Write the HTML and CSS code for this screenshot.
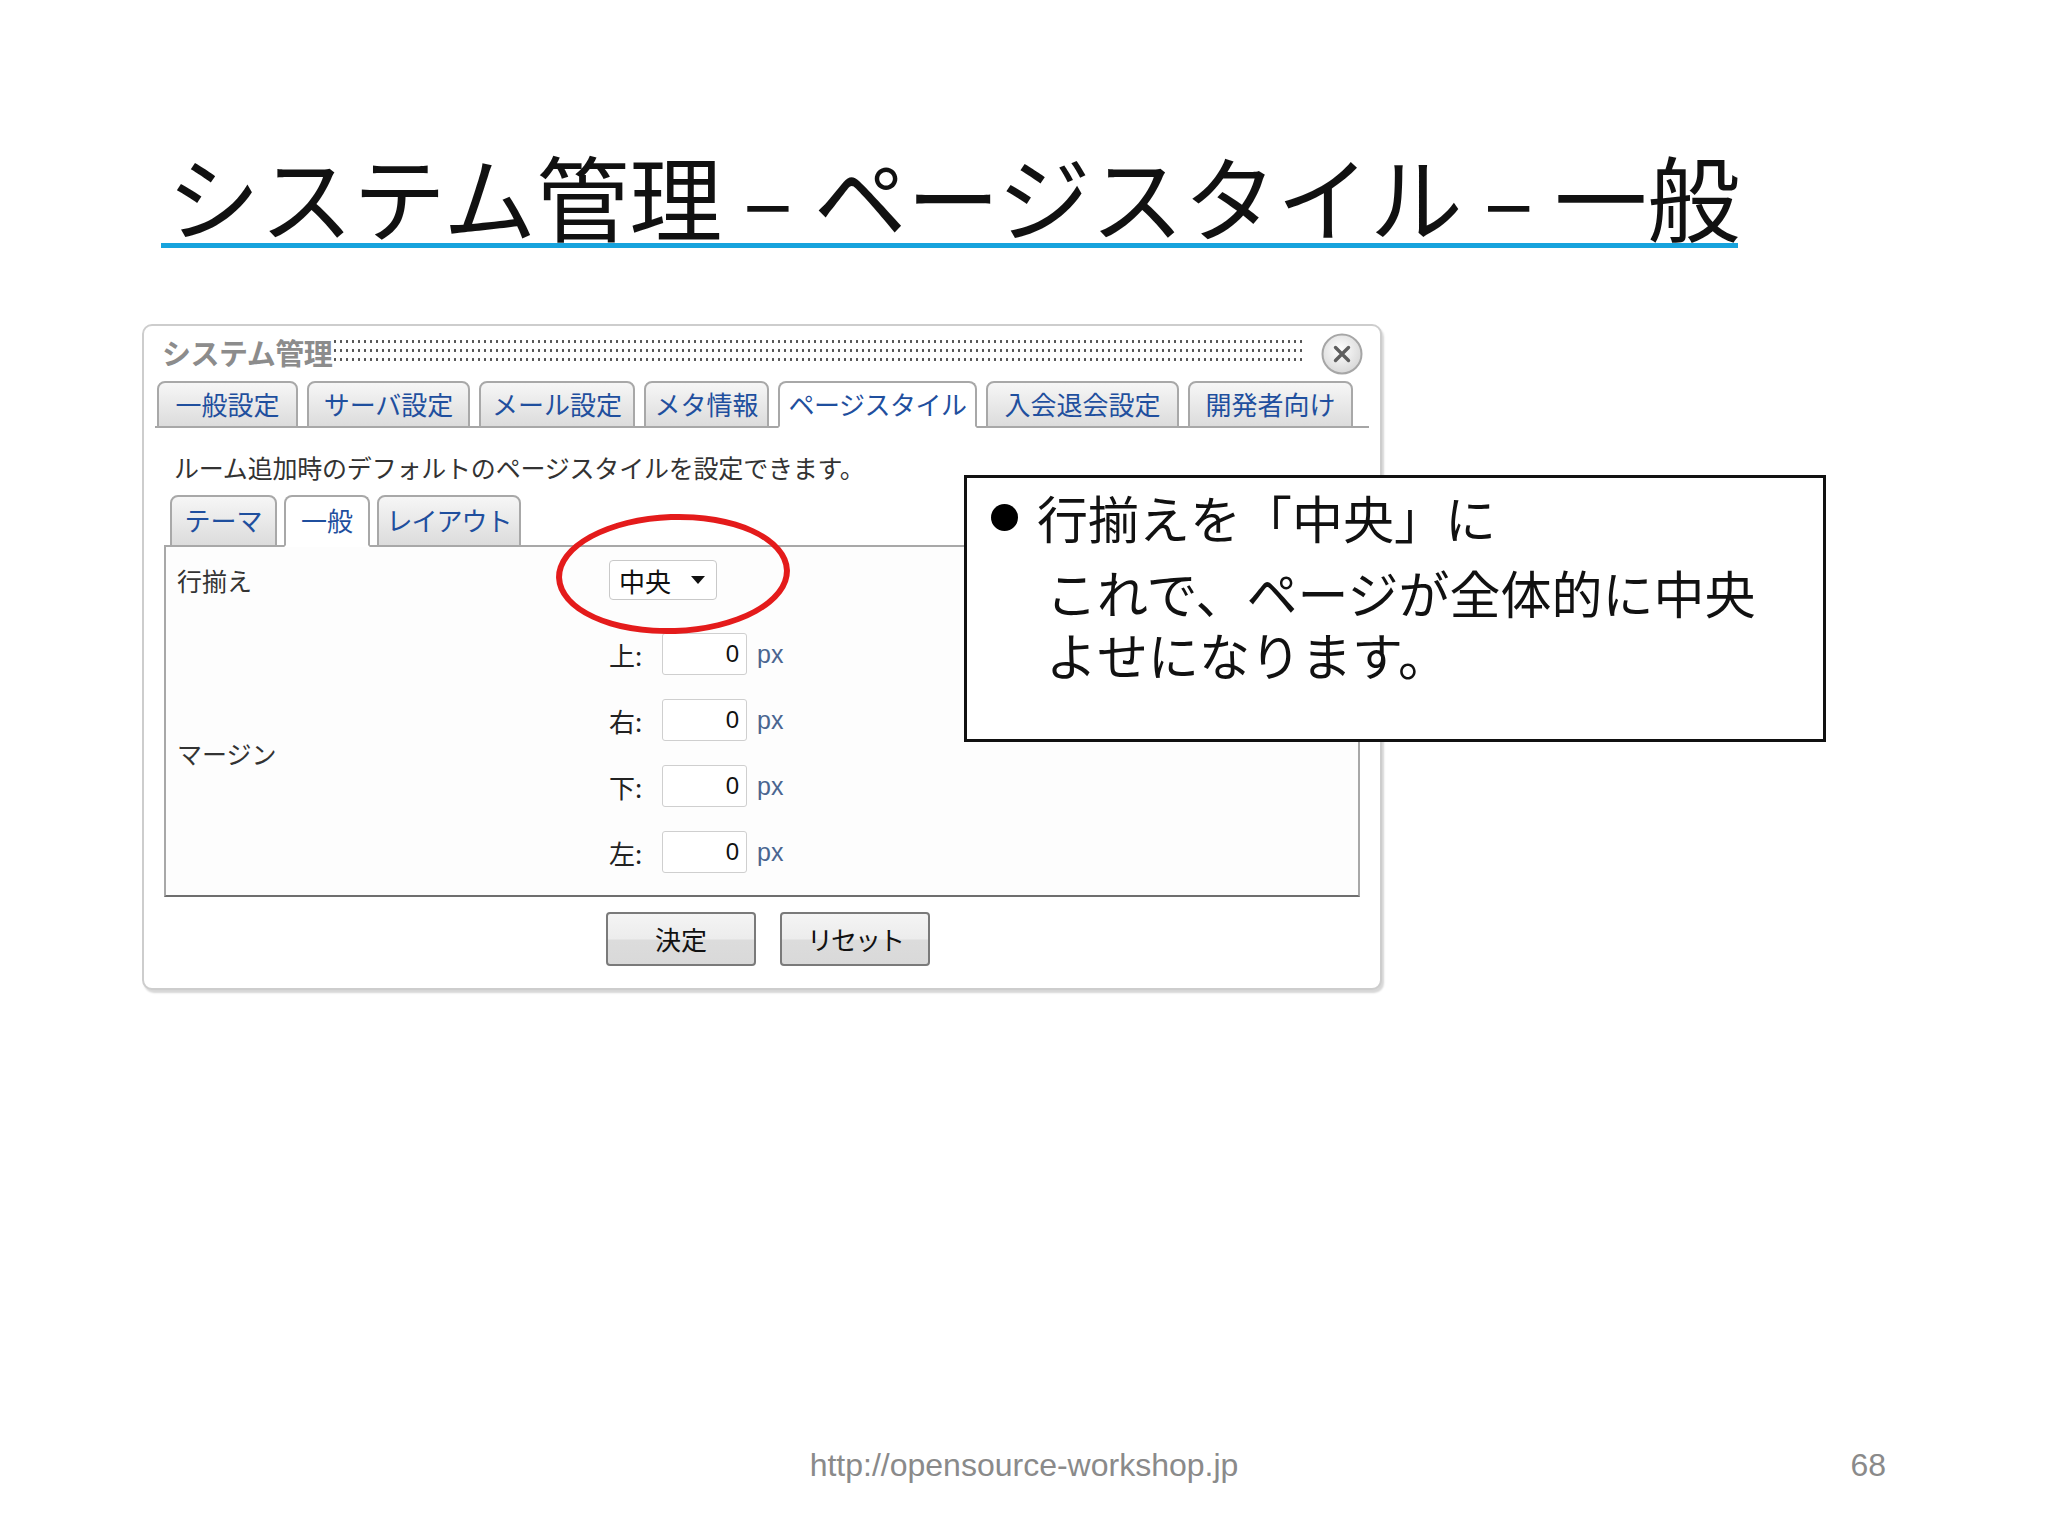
FILE: index.html
```html
<!DOCTYPE html>
<html lang="ja">
<head>
<meta charset="utf-8">
<title>システム管理 – ページスタイル – 一般</title>
<link rel="stylesheet" href="styles.css">
</head>
<body>
<div class="slide">
  <h1 class="title">システム管理 – ページスタイル – 一般</h1>

  <div class="window">
    <div class="win-head">
      <span class="win-title">システム管理</span>
      <span class="win-dots"></span>
      <span class="win-close">
        <svg width="42" height="42" viewBox="0 0 42 42">
          <defs>
            <radialGradient id="cg" cx="45%" cy="40%" r="60%">
              <stop offset="0" stop-color="#ffffff"/>
              <stop offset="1" stop-color="#d8d8d8"/>
            </radialGradient>
          </defs>
          <circle cx="21" cy="21" r="19.5" fill="url(#cg)" stroke="#a6a6a6" stroke-width="2"/>
          <path d="M14.5 14.5 L27.5 27.5 M27.5 14.5 L14.5 27.5" stroke="#5e5e5e" stroke-width="3.4" stroke-linecap="round"/>
        </svg>
      </span>
    </div>

    <div class="tabs">
      <span class="tab w1">一般設定</span>
      <span class="tab w2">サーバ設定</span>
      <span class="tab w3">メール設定</span>
      <span class="tab w4">メタ情報</span>
      <span class="tab w5 active">ページスタイル</span>
      <span class="tab w6">入会退会設定</span>
      <span class="tab w7">開発者向け</span>
    </div>

    <p class="desc">ルーム追加時のデフォルトのページスタイルを設定できます。</p>

    <div class="subtabs">
      <span class="subtab s1">テーマ</span>
      <span class="subtab s2 active">一般</span>
      <span class="subtab s3">レイアウト</span>
    </div>

    <div class="panel">
      <span class="label">行揃え</span>
      <div class="value">
        <span class="select">中央<span class="caret"></span></span>
      </div>

      <span class="label">マージン</span>
      <div class="margins">
        <div class="mrow"><span class="mlab">上:</span><span class="input">0</span><span class="unit">px</span></div>
        <div class="mrow"><span class="mlab">右:</span><span class="input">0</span><span class="unit">px</span></div>
        <div class="mrow"><span class="mlab">下:</span><span class="input">0</span><span class="unit">px</span></div>
        <div class="mrow"><span class="mlab">左:</span><span class="input">0</span><span class="unit">px</span></div>
      </div>

      <span class="ring"></span>
    </div>

    <div class="buttons">
      <span class="btn">決定</span>
      <span class="btn">リセット</span>
    </div>
  </div>

  <div class="callout">
    <div class="c-main"><span class="bullet"></span><span class="c-text">行揃えを「中央」に</span></div>
    <p class="c-sub">これで、ページが全体的に中央<br>よせになります。</p>
  </div>

  <footer class="foot">
    <span></span>
    <span class="url">http://opensource-workshop.jp</span>
    <span class="pno">68</span>
  </footer>
</div>
</body>
</html>
```

FILE: styles.css
```css
* { box-sizing: border-box; }

body {
  margin: 0;
  background: #ffffff;
}

.slide {
  position: relative;
  width: 2048px;
  height: 1536px;
  display: flex;
  flex-direction: column;
  align-items: flex-start;
  background: #ffffff;
  overflow: hidden;
  font-family: "Noto Sans CJK JP", "Noto Sans", sans-serif;
  color: #111;
}

/* ---------- title ---------- */
.title {
  margin: 149px 0 0 161px;
  width: 1577px;
  padding: 0 0 2px 6px;
  font-size: 93px;
  line-height: 92px;
  font-weight: 400;
  white-space: nowrap;
  color: #111;
  border-bottom: 5px solid #17a3dd;
}

/* ---------- window ---------- */
.window {
  position: relative;
  margin: 76px 0 0 142px;
  width: 1240px;
  height: 666px;
  border: 2px solid #cdcdcd;
  border-radius: 10px;
  background: #ffffff;
  box-shadow: 2px 3px 2px rgba(0, 0, 0, 0.16);
  display: flex;
  flex-direction: column;
}

.win-head {
  height: 53px;
  display: flex;
  align-items: flex-start;
  padding: 11px 17px 0 18px;
}

.win-title {
  font-size: 29px;
  line-height: 30px;
  font-weight: 700;
  color: #8c8c8c;
  letter-spacing: -0.5px;
}

.win-dots {
  flex: 1;
  height: 27px;
  margin: 1px 15px 0 0;
  background-image: radial-gradient(circle, #555555 1.1px, transparent 1.5px);
  background-size: 6px 9px;
  background-position: 0 -1px;
}

.win-close {
  width: 42px;
  height: 42px;
  margin-top: -4px;
  display: block;
}
.win-close svg { display: block; }

/* ---------- top tabs ---------- */
.tabs {
  display: flex;
  align-items: flex-end;
  gap: 9px;
  margin: 0 11px;
  padding-left: 2px;
  height: 49px;
  border-bottom: 2px solid #a6a6a6;
}

.tab {
  height: 47px;
  margin-bottom: -2px;
  border: 2px solid #a8a8a8;
  border-radius: 8px 8px 0 0;
  background: linear-gradient(#f6f6f6, #dcdcdc);
  font-size: 26px;
  line-height: 42px;
  text-align: center;
  color: #1f4f9e;
  white-space: nowrap;
}
.tab.active {
  background: #ffffff;
  border-bottom-color: #ffffff;
}
.w1 { width: 141px; }
.w2 { width: 163px; }
.w3 { width: 156px; }
.w4 { width: 125px; }
.w5 { width: 199px; letter-spacing: -0.5px; }
.w6 { width: 193px; }
.w7 { width: 165px; }

/* ---------- description ---------- */
.desc {
  align-self: flex-start;
  margin: 24px 0 0 30px;
  font-size: 25px;
  line-height: 30px;
  color: #333333;
  letter-spacing: -0.2px;
}

/* ---------- sub tabs ---------- */
.subtabs {
  display: flex;
  align-items: flex-end;
  margin: 13px 0 0 26px;
  height: 50px;
  gap: 7px;
  position: relative;
  z-index: 1;
}

.subtab {
  height: 52px;
  margin-bottom: -2px;
  border: 2px solid #a8a8a8;
  border-radius: 8px 8px 0 0;
  background: linear-gradient(#f6f6f6, #dcdcdc);
  font-size: 26px;
  line-height: 46px;
  text-align: center;
  color: #1f4f9e;
}
.subtab.active {
  background: #ffffff;
  border-bottom-color: #ffffff;
}
.s1 { width: 107px; }
.s2 { width: 86px; }
.s3 { width: 144px; letter-spacing: -1px; }

/* ---------- panel ---------- */
.panel {
  position: relative;
  margin-left: 20px;
  width: 1196px;
  height: 352px;
  border: 2px solid #a8a8a8;
  border-bottom-color: #6e6e6e;
  background: #fdfdfd;
  padding: 13px 0 0 11px;
  display: grid;
  grid-template-columns: 432px auto;
  grid-template-rows: 40px auto;
  row-gap: 33px;
  align-content: start;
}

.label {
  font-size: 25px;
  color: #333333;
  align-self: center;
}

.value { display: flex; align-items: center; }

.select {
  display: flex;
  align-items: center;
  width: 108px;
  height: 40px;
  padding-left: 9px;
  border: 1px solid #c9c9c9;
  border-radius: 4px;
  background: #ffffff;
  font-size: 26px;
  color: #111;
}
.caret {
  margin-left: 20px;
  width: 0;
  height: 0;
  border-left: 7px solid transparent;
  border-right: 7px solid transparent;
  border-top: 8px solid #111;
}

.margins {
  display: flex;
  flex-direction: column;
  gap: 24px;
}

.mrow {
  display: flex;
  align-items: center;
  height: 42px;
}

.mlab {
  width: 53px;
  font-size: 26px;
  color: #222;
}

.input {
  width: 85px;
  height: 42px;
  border: 1px solid #cfcfcf;
  border-radius: 3px;
  background: #ffffff;
  text-align: right;
  padding-right: 7px;
  font-family: "Liberation Sans", sans-serif;
  font-size: 24px;
  line-height: 40px;
  color: #111;
}

.unit {
  margin-left: 10px;
  font-family: "Liberation Sans", sans-serif;
  font-size: 25px;
  color: #4a6590;
}

.ring {
  position: absolute;
  left: 390px;
  top: -33px;
  width: 234px;
  height: 120px;
  border: 6px solid #e41b1b;
  border-radius: 50%;
  transform: rotate(-2deg);
}

/* ---------- buttons ---------- */
.buttons {
  display: flex;
  justify-content: center;
  gap: 24px;
  margin-top: 15px;
  padding-left: 12px;
}

.btn {
  width: 150px;
  height: 54px;
  border: 2px solid #7a7a7a;
  border-radius: 4px;
  background: linear-gradient(#f4f4f4 0%, #ececec 50%, #dcdcdc 52%, #d9d9d9 100%);
  font-size: 26px;
  line-height: 50px;
  text-align: center;
  color: #111;
}
.btn + .btn { letter-spacing: -2px; }

/* ---------- callout ---------- */
.callout {
  position: absolute;
  left: 964px;
  top: 475px;
  width: 862px;
  height: 267px;
  border: 3px solid #111;
  background: #ffffff;
  padding-top: 10px;
}

.c-main {
  display: flex;
  align-items: center;
  padding-left: 24px;
  height: 59px;
}

.bullet {
  width: 27px;
  height: 27px;
  border-radius: 50%;
  background: #000;
  margin-right: 19px;
  flex: none;
}

.c-text {
  font-size: 51px;
  line-height: 59px;
  white-space: nowrap;
}

.c-sub {
  margin: 14px 0 0 0;
  padding-left: 79px;
  font-size: 51px;
  line-height: 62px;
  white-space: nowrap;
}

/* ---------- footer ---------- */
.foot {
  margin-top: auto;
  width: 100%;
  display: grid;
  grid-template-columns: 1fr auto 1fr;
  padding: 0 162px 51px 162px;
  font-family: "Liberation Sans", sans-serif;
  font-size: 32px;
  line-height: 40px;
  color: #8a8a8a;
}
.pno { justify-self: end; }
```
